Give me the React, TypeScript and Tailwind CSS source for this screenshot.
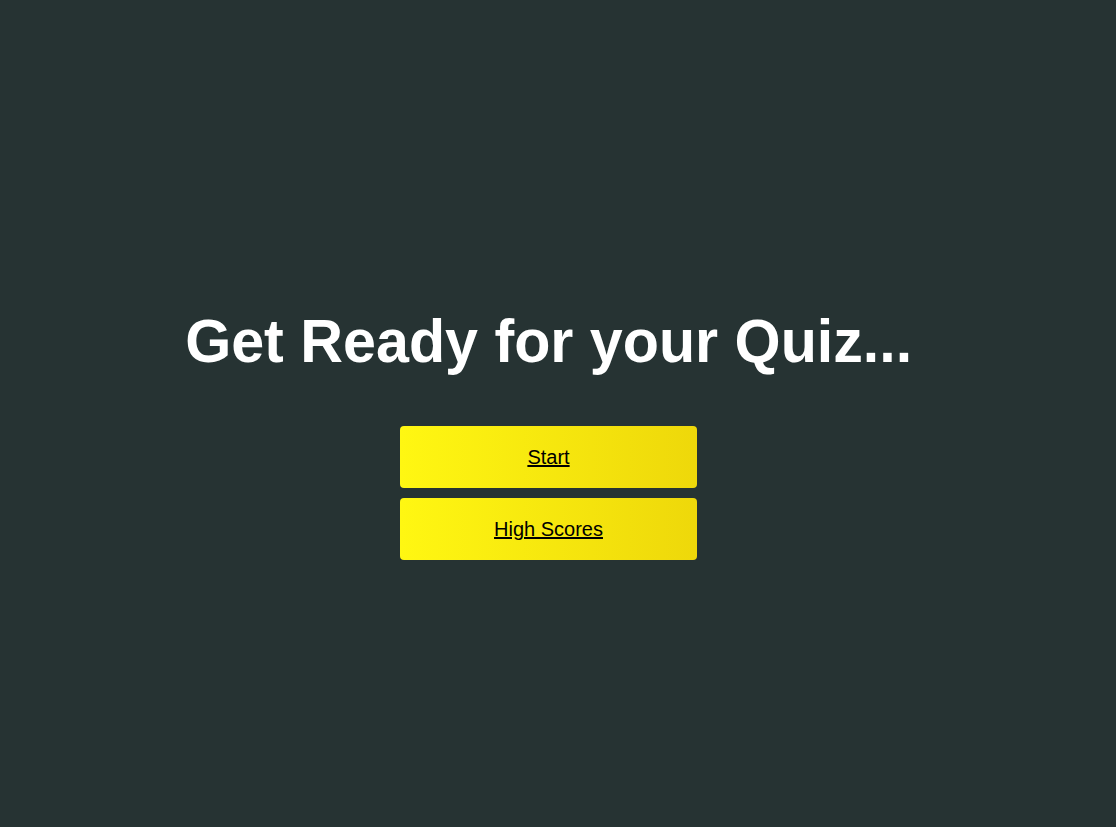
import React from "react";

const buttons = ["Start", "High Scores"];

export default function App() {
  return (
    <div
      className="min-h-screen w-full bg-[#263333] flex flex-col items-center justify-center pt-[38px] pr-[19px]"
      style={{ fontFamily: '"Liberation Sans", Arial, sans-serif' }}
    >
      <h1 className="text-[62px] leading-[72px] font-bold text-white mb-[49px]">
        <span className="inline-block scale-x-[0.955] whitespace-nowrap">
          Get Ready for your Quiz...
        </span>
      </h1>
      <div className="flex flex-col gap-[10px]">
        {buttons.map((label) => (
          <a
            key={label}
            href="#"
            className="w-[297px] h-[62px] flex items-center justify-center rounded bg-linear-to-r from-[#fff712] to-[#eed80a] text-black text-[20px] underline"
          >
            {label}
          </a>
        ))}
      </div>
    </div>
  );
}
